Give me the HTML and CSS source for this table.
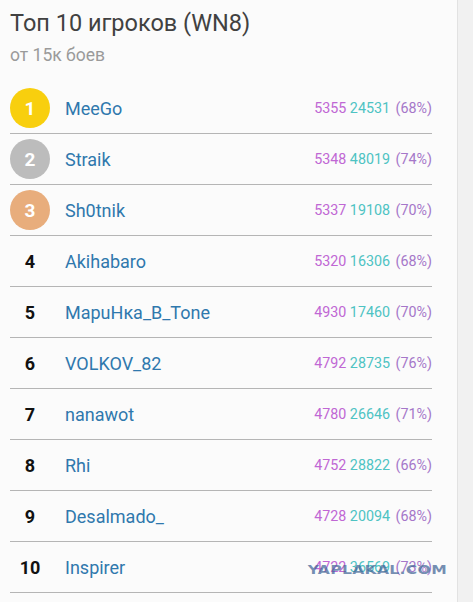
FILE: index.html
```html
<!DOCTYPE html>
<html>
<head>
<meta charset="utf-8">
<link rel="stylesheet" href="styles.css">
</head>
<body>
<div class="page">
  <main class="main">
    <h1 class="title">Топ 10 игроков (WN8)</h1>
    <div class="subtitle">от 15к боев</div>
    <ul class="list">
      <li class="row"><span class="rank medal gold">1</span><span class="name">MeeGo</span><span class="stats"><span class="wn8">5355</span> <span class="battles">24531</span> <span class="pct">(68%)</span></span></li>
      <li class="row"><span class="rank medal silver">2</span><span class="name">Straik</span><span class="stats"><span class="wn8">5348</span> <span class="battles">48019</span> <span class="pct">(74%)</span></span></li>
      <li class="row"><span class="rank medal bronze">3</span><span class="name">Sh0tnik</span><span class="stats"><span class="wn8">5337</span> <span class="battles">19108</span> <span class="pct">(70%)</span></span></li>
      <li class="row"><span class="rank">4</span><span class="name">Akihabaro</span><span class="stats"><span class="wn8">5320</span> <span class="battles">16306</span> <span class="pct">(68%)</span></span></li>
      <li class="row"><span class="rank">5</span><span class="name">МарuНка_В_Tone</span><span class="stats"><span class="wn8">4930</span> <span class="battles">17460</span> <span class="pct">(70%)</span></span></li>
      <li class="row"><span class="rank">6</span><span class="name">VOLKOV_82</span><span class="stats"><span class="wn8">4792</span> <span class="battles">28735</span> <span class="pct">(76%)</span></span></li>
      <li class="row"><span class="rank">7</span><span class="name">nanawot</span><span class="stats"><span class="wn8">4780</span> <span class="battles">26646</span> <span class="pct">(71%)</span></span></li>
      <li class="row"><span class="rank">8</span><span class="name">Rhi</span><span class="stats"><span class="wn8">4752</span> <span class="battles">28822</span> <span class="pct">(66%)</span></span></li>
      <li class="row"><span class="rank">9</span><span class="name">Desalmado_</span><span class="stats"><span class="wn8">4728</span> <span class="battles">20094</span> <span class="pct">(68%)</span></span></li>
      <li class="row"><span class="rank">10</span><span class="name">Inspirer</span><span class="stats"><span class="wn8">4722</span> <span class="battles">36569</span> <span class="pct">(73%)</span></span><span class="watermark">YAPLAKAL.COM</span></li>
    </ul>
  </main>
  <aside class="side"></aside>
</div>
</body>
</html>
```
FILE: styles.css
```css
* { box-sizing: border-box; }
html, body { margin: 0; padding: 0; }
body {
  background: #fbfbfb;
  font-family: Roboto, "Noto Sans", sans-serif;
  width: 473px;
  height: 602px;
  overflow: hidden;
}
.page {
  display: flex;
  height: 602px;
}
.main {
  width: 457px;
  padding: 6px 25px 0 10px;
  background: #fbfbfb;
}
.side {
  flex: 1;
  background: #f1f1f1;
  border-left: 1px solid #e2e2e2;
}
.title {
  margin: 0;
  font-size: 23.5px;
  font-weight: 400;
  color: #414141;
  line-height: 34px;
}
.subtitle {
  font-size: 17.5px;
  color: #9a9a9a;
  line-height: 22px;
  margin-top: 4px;
}
.list {
  list-style: none;
  margin: 17px 0 0 0;
  padding: 0;
}
.row {
  position: relative;
  display: flex;
  align-items: center;
  height: 51px;
  border-bottom: 1px solid #b5b5b5;
}
.rank {
  width: 40px;
  height: 40px;
  display: flex;
  align-items: center;
  justify-content: center;
  font-size: 18px;
  font-weight: 700;
  color: #111;
  flex: none;
}
.medal {
  border-radius: 50%;
  color: #fff;
  font-size: 19px;
}
.gold { background: #f8cf0e; }
.silver { background: #bcbcbc; }
.bronze { background: #e8ad7c; }
.name {
  margin-left: 15px;
  font-size: 18px;
  color: #2f78ad;
  flex: 1;
}
.stats {
  font-size: 14.3px;
  white-space: nowrap;
}
.wn8 { color: #c067d4; }
.battles { color: #4ec3c3; }
.pct { color: #a577c9; margin-left: 2px; }
.watermark {
  position: absolute;
  right: -15px;
  top: 19px;
  font-family: "DejaVu Sans", sans-serif;
  font-weight: 700;
  font-size: 15px;
  letter-spacing: 0.3px;
  color: rgba(65, 100, 150, 0.72);
  transform: scale(1.04, 0.82);
  transform-origin: right center;
}
```
